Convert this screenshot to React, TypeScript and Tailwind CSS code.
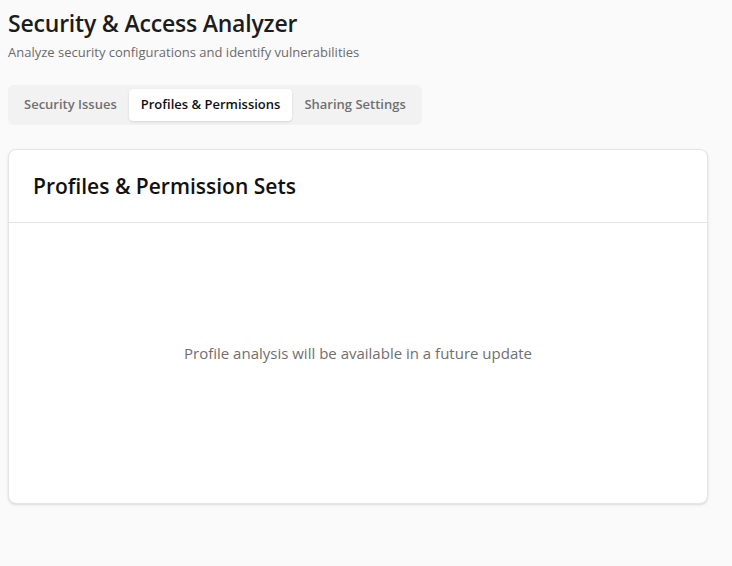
import { useState } from 'react';

const tabs = ['Security Issues', 'Profiles & Permissions', 'Sharing Settings'];

const App = () => {
  const [active, setActive] = useState('Profiles & Permissions');

  return (
    <div
      className="min-h-[566px] bg-[#fafafa] px-2 pt-[6px] text-[#1f1f1f]"
      style={{ fontFamily: '"Open Sans", "Noto Sans", sans-serif' }}
    >
      <h1 className="text-[23px] font-semibold leading-[34px] tracking-[-0.2px] text-[#1c1c1c]">
        Security &amp; Access Analyzer
      </h1>
      <p className="mt-[3px] text-[13px] leading-[18px] text-[#6b6b6b]">
        Analyze security configurations and identify vulnerabilities
      </p>

      <div className="mt-[24px] inline-flex h-10 items-center gap-0 rounded-md bg-[#f2f2f2] p-1 pr-[4px]">
        {tabs.map((tab) => (
          <button
            key={tab}
            onClick={() => setActive(tab)}
            className={
              tab === active
                ? 'h-8 rounded-[4px] bg-white px-[12px] text-[13px] font-semibold text-[#111] shadow-sm'
                : 'h-8 rounded-[4px] px-[12px] text-[13px] font-semibold text-[#707070]'
            }
          >
            {tab}
          </button>
        ))}
      </div>

      <div className="mt-[24px] w-[700px] rounded-lg border border-[#e5e5e5] bg-white shadow-sm">
        <div className="border-b border-[#e5e5e5] px-6 py-[22px]">
          <h2 className="text-[21px] font-semibold leading-[28px] text-[#111]">
            Profiles &amp; Permission Sets
          </h2>
        </div>
        <div className="flex h-[280px] items-center justify-center pb-[20px]">
          <p className="text-[15px] text-[#707070]">
            Profile analysis will be available in a future update
          </p>
        </div>
      </div>
    </div>
  );
};

export default App;
